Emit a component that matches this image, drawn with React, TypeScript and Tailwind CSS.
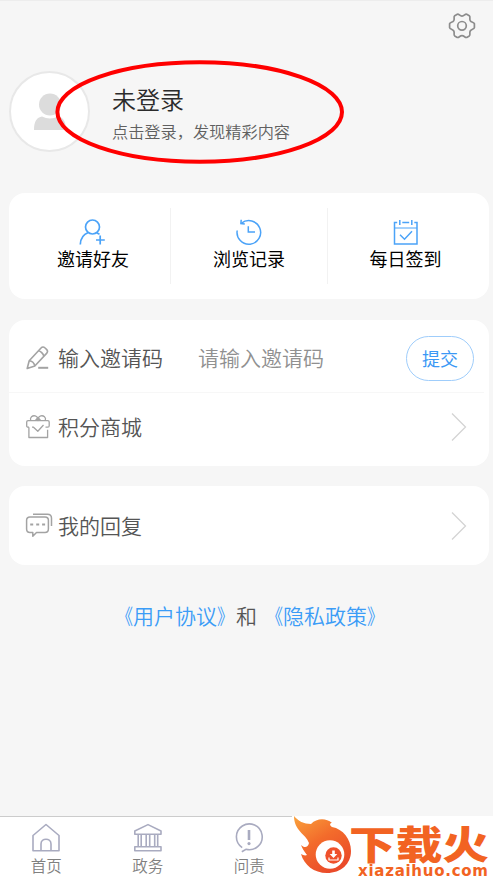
import type { ReactNode } from 'react';

function GearIcon() {
  return (
    <svg width="28" height="28" viewBox="0 0 28 28" fill="none" stroke="#8c8c8c" strokeWidth="1.7" strokeLinejoin="round">
      <path d="M9.3 2.2C11 1.6 11.6 4.1 14 4.1S17 1.6 18.7 2.2L21.3 3.7C22.8 4.8 21.1 6.5 22.2 8.6C23.3 10.6 26 10 26.4 11.8V15.6C26 17.5 23.4 17 22.2 19C21.1 21 22.8 22.7 21.3 23.9L18.7 25.4C17 26 16.4 23.7 14 23.7S11 26 9.3 25.4L6.7 23.9C5.2 22.7 6.9 21 5.8 19C4.6 17 2 17.5 1.6 15.6V11.8C2 10 4.7 10.6 5.8 8.6C6.9 6.5 5.2 4.8 6.7 3.7Z" />
      <circle cx="14" cy="13.8" r="4.3" />
    </svg>
  );
}

function InviteIcon() {
  return (
    <svg width="28" height="28" viewBox="0 0 28 28" fill="none" stroke="#4ba3f8" strokeWidth="1.7">
      <circle cx="13.5" cy="9" r="7" />
      <path d="M1.3 26.5C1.5 20.5 4.5 16.3 9.3 14.5M17.5 14.8L20.5 16.3M21.2 17.6V26.4M17 22H25.8" />
    </svg>
  );
}

function HistoryIcon() {
  return (
    <svg width="28" height="28" viewBox="0 0 28 28" fill="none" stroke="#4ba3f8" strokeWidth="1.5">
      <path d="M2.2 12.5A11.8 11.8 0 1 0 6.5 5.2" />
      <path d="M6.2 1.8L5.9 5.6L9.8 5.9M13.3 8.2V14H20" />
    </svg>
  );
}

function CheckInIcon() {
  return (
    <svg width="28" height="28" viewBox="0 0 28 28" fill="none" stroke="#4ba3f8" strokeWidth="1.5">
      <path d="M5.2 4.4H2.5V26H25V4.4H22.3M10.3 4.4H17.2M7.8 2V7M19.8 2V7" />
      <path d="M2.5 10H25" strokeWidth="1" />
      <path d="M8 16.8L12.5 21.2L20 13.2" />
    </svg>
  );
}

function PencilIcon() {
  return (
    <svg width="26" height="26" viewBox="0 0 26 26" fill="none" stroke="#a3a3a3" strokeWidth="1.6" strokeLinejoin="round">
      <path d="M2.2 23.5L4.2 15.8L15.8 3.2C17 1.9 18.8 1.8 20.1 3L21.5 4.3C22.8 5.5 22.7 7.1 21.6 8.4L9.8 21ZM4.2 15.8C7 16 9.2 18 9.8 21M13.8 5.8C15.5 6.1 18.2 8.6 18.8 11" />
      <path d="M13.2 22.8H23.2" strokeWidth="2" />
    </svg>
  );
}

function GiftIcon() {
  return (
    <svg width="26" height="26" viewBox="0 0 26 26" fill="none" stroke="#a3a3a3" strokeWidth="1.3" strokeLinejoin="round">
      <path d="M4 13.2H3.2C2.2 13.2 1.7 12.7 1.7 11.7V8.1C1.7 7.2 2.2 6.7 3.1 6.7H22.8C23.8 6.7 24.2 7.2 24.2 8.1V11.7C24.2 12.7 23.8 13.2 22.8 13.2H20.5M3.9 13.2V23.5H22.6V15.8" />
      <path d="M5.7 6.5C4.6 3.4 7.5 1.2 10.2 1.9C12 2.4 13 4.2 13 6.5C13 4.2 14 2.4 15.8 1.9C18.5 1.2 21.4 3.4 20.3 6.5M10.5 6.5L13 3.5L15.5 6.5M7 13.2H8.5L12.8 17.2L18.5 11" />
    </svg>
  );
}

function ReplyIcon() {
  return (
    <svg width="28" height="26" viewBox="0 0 28 26" fill="none" stroke="#a3a3a3" strokeWidth="1.5" strokeLinejoin="round">
      <path d="M5 3.9H20C22.2 3.9 23.4 5.2 23.4 7.3V16C23.4 18.2 22.2 19.5 20 19.5H11.5L7.8 23.2V19.5H5C2.8 19.5 1.6 18.2 1.6 16V7.3C1.6 5.2 2.8 3.9 5 3.9Z" />
      <path d="M8 1.2H22.5C25.3 1.2 26.5 2.7 26.5 5.2V13" />
      <path d="M5.2 11.5H8.2M11.2 11.5H14.2M17.1 11.5H20.1" strokeWidth="1.9" />
    </svg>
  );
}

function Chevron() {
  return (
    <svg width="16" height="30" viewBox="0 0 16 30" fill="none" stroke="#d4d4d4" strokeWidth="1.3">
      <path d="M1 1.5L14.5 15L1 28.5" />
    </svg>
  );
}

function HomeIcon() {
  return (
    <svg width="30" height="30" viewBox="0 0 30 30" fill="none" stroke="#a9abc0" strokeWidth="1.6" strokeLinejoin="round">
      <path d="M2 27.8V12.5L15 1.5L28 12.5V27.8ZM10 27.8V21C10 14.7 20 14.7 20 21V27.8" />
    </svg>
  );
}

function GovIcon() {
  return (
    <svg width="30" height="30" viewBox="0 0 30 30" fill="none" stroke="#a9abc0" strokeWidth="1.6" strokeLinejoin="round">
      <path d="M1.8 11.3V8L15 1.6L28 8V11.3ZM1.8 23.8H28V27.8H1.8ZM5.2 11.5V23.5M8.2 11.5V23.5M13.2 11.5V23.5M16.7 11.5V23.5M21.7 11.5V23.5M24.7 11.5V23.5" />
    </svg>
  );
}

function AskIcon() {
  return (
    <svg width="30" height="30" viewBox="0 0 30 30" fill="none" stroke="#a9abc0" strokeWidth="1.6">
      <path d="M8.2 24.6A12.9 12.9 0 1 1 12 26.3L7.8 28.8" />
      <path d="M15 7V17" strokeWidth="2.6" />
      <circle cx="15" cy="20.6" r="1.6" fill="#a9abc0" stroke="none" />
    </svg>
  );
}

function SiteLogo() {
  return (
    <svg width="201" height="64" viewBox="0 0 201 64" className="overflow-visible">
      <defs>
        <linearGradient id="flame" x1="0" y1="0" x2="0.6" y2="1">
          <stop offset="0" stopColor="#f9a23c" />
          <stop offset="0.5" stopColor="#f36b2b" />
          <stop offset="1" stopColor="#ea4b2a" />
        </linearGradient>
      </defs>
      <path
        fill="url(#flame)"
        d="M2 0C6 5 12 8 19 8C25 2 34 2 40 7C38 7 37 9 40 11C51 13 59 23 59 35C59 48 49 57 35 57C22 57 12 49 9 38C11 39 13 40 15 39C12 35 10 32 9 29C12 32 16 32 17 27C14 18 2 15 2 0Z"
      />
      <circle cx="38" cy="38.5" r="14.3" fill="#fff" />
      <circle cx="41.5" cy="39.5" r="8.2" fill="#ef512c" />
      <path d="M40.2 34.5H42.8V38H45.3L41.5 42L37.7 38H40.2Z" fill="#fff" />
      <path d="M37 41.5V44H46V41.5" fill="none" stroke="#fff" strokeWidth="1.2" />
      <text
        x="57"
        y="43"
        textLength="140"
        lengthAdjust="spacingAndGlyphs"
        fill="#f26322"
        className="font-['Noto_Sans_CJK_SC',sans-serif] text-[39px] font-black"
      >
        下载火
      </text>
      <text
        x="66"
        y="59.5"
        textLength="130"
        lengthAdjust="spacing"
        fill="#f26322"
        className="font-['DejaVu_Sans',sans-serif] text-[15px] font-bold"
      >
        xiazaihuo.com
      </text>
    </svg>
  );
}

function Row({ icon, label, children }: { icon: ReactNode; label: string; children: ReactNode }) {
  return (
    <div className="flex items-center pr-[15px] pl-4">
      <div className="flex w-[33px] shrink-0">{icon}</div>
      <span className="-mt-px text-[21px] text-[#555]">{label}</span>
      {children}
    </div>
  );
}

function DocLink({ title }: { title: string }) {
  return (
    <a className="flex text-[#3b9cf7]">
      <span className="origin-right scale-x-80">《</span>
      <span>{title}</span>
      <span className="origin-left scale-x-80">》</span>
    </a>
  );
}

const shortcuts = [
  { label: '邀请好友', icon: <InviteIcon /> },
  { label: '浏览记录', icon: <HistoryIcon /> },
  { label: '每日签到', icon: <CheckInIcon /> },
];

const tabs = [
  { label: '首页', icon: <HomeIcon /> },
  { label: '政务', icon: <GovIcon /> },
  { label: '问责', icon: <AskIcon /> },
];

export default function App() {
  return (
    <div className="relative flex h-[880px] w-[493px] flex-col overflow-hidden border-t border-[#ededed] bg-[#f6f6f6] font-['Noto_Sans_CJK_SC',sans-serif] leading-none font-[350] whitespace-nowrap">
      <header className="flex h-[49px] justify-end pt-[11px] pr-[17px]">
        <GearIcon />
      </header>

      <section className="flex h-[143px] pt-[21px] pl-[9px]">
        <div className="flex h-[81px] w-[81px] items-center justify-center rounded-full border-2 border-[#e8e8e8] bg-white">
          <svg width="36" height="38" viewBox="0 0 36 38" fill="#dcdcdc">
            <circle cx="18" cy="11.5" r="11" />
            <path d="M2 37C2 28 5 24.5 10 23.5C15 26 21 26 26 23.5C31 24.5 34 28 34 37Z" />
          </svg>
        </div>
        <div className="pt-4 pl-[22px]">
          <h1 className="text-2xl leading-none text-[#2b2b2b]">未登录</h1>
          <p className="mt-3 text-[16.2px] text-[#606060]">点击登录，发现精彩内容</p>
        </div>
      </section>

      <main className="flex flex-1 flex-col pr-1 pl-[9px]">
        <section className="grid h-[106px] grid-cols-[162px_157px_1fr] rounded-2xl bg-white py-[15px]">
          {shortcuts.map((item, i) => (
            <div
              key={item.label}
              className={`flex flex-col items-center pt-[10px] ${i < 2 ? 'border-r border-[#f2f2f2]' : ''} ${i === 0 ? 'pl-[7px]' : ''} ${i === 2 ? 'pr-[6px]' : ''}`}
            >
              {item.icon}
              <span className="mt-[3px] text-[18px] font-normal text-black">{item.label}</span>
            </div>
          ))}
        </section>

        <section className="mt-[21px] h-[146px] rounded-2xl bg-white">
          <div className="mr-[5px] flex h-[73px] flex-col justify-center border-b border-[#f7f7f7] pt-[4px]">
            <Row icon={<PencilIcon />} label="输入邀请码">
              <span className="-mt-px ml-[35px] text-[21px] text-[#909090]">请输入邀请码</span>
              <button className="mr-[-5px] ml-auto h-[45px] w-[68px] rounded-full border border-[#9fcdfb] text-[18px] font-normal text-[#3b98f5]">
                提交
              </button>
            </Row>
          </div>
          <div className="flex h-[67px] flex-col justify-center">
            <Row icon={<GiftIcon />} label="积分商城">
              <div className="mr-[7px] ml-auto">
                <Chevron />
              </div>
            </Row>
          </div>
        </section>

        <section className="mt-[20px] flex h-[79px] flex-col justify-center rounded-2xl bg-white">
          <Row icon={<ReplyIcon />} label="我的回复">
            <div className="mr-[7px] ml-auto">
              <Chevron />
            </div>
          </Row>
        </section>

        <p className="mt-10 flex pl-[103px] text-[21px] text-[#555]">
          <DocLink title="用户协议" />
          <span className="-ml-0.5 mr-[5px]">和</span>
          <DocLink title="隐私政策" />
        </p>
      </main>

      <nav className="flex h-16 border-t border-[#ccc] bg-white pl-1">
        <div className="flex flex-1 gap-[17px]">
          {tabs.map((tab) => (
            <div key={tab.label} className="flex w-[84.5px] flex-col items-center pt-[6px]">
              {tab.icon}
              <span className="mt-[5px] text-[15.5px] text-[#808080]">{tab.label}</span>
            </div>
          ))}
        </div>
        <div className="mt-[-1px] mr-0.5 h-16 w-[201px] bg-white">
          <SiteLogo />
        </div>
      </nav>

      {/* hand-drawn highlight around the login prompt */}
      <svg className="pointer-events-none absolute top-[57px] left-[53px]" width="294" height="110" viewBox="0 0 294 110">
        <ellipse cx="146.7" cy="54" rx="142.3" ry="49.7" fill="none" stroke="#f00" strokeWidth="4" />
      </svg>
    </div>
  );
}
